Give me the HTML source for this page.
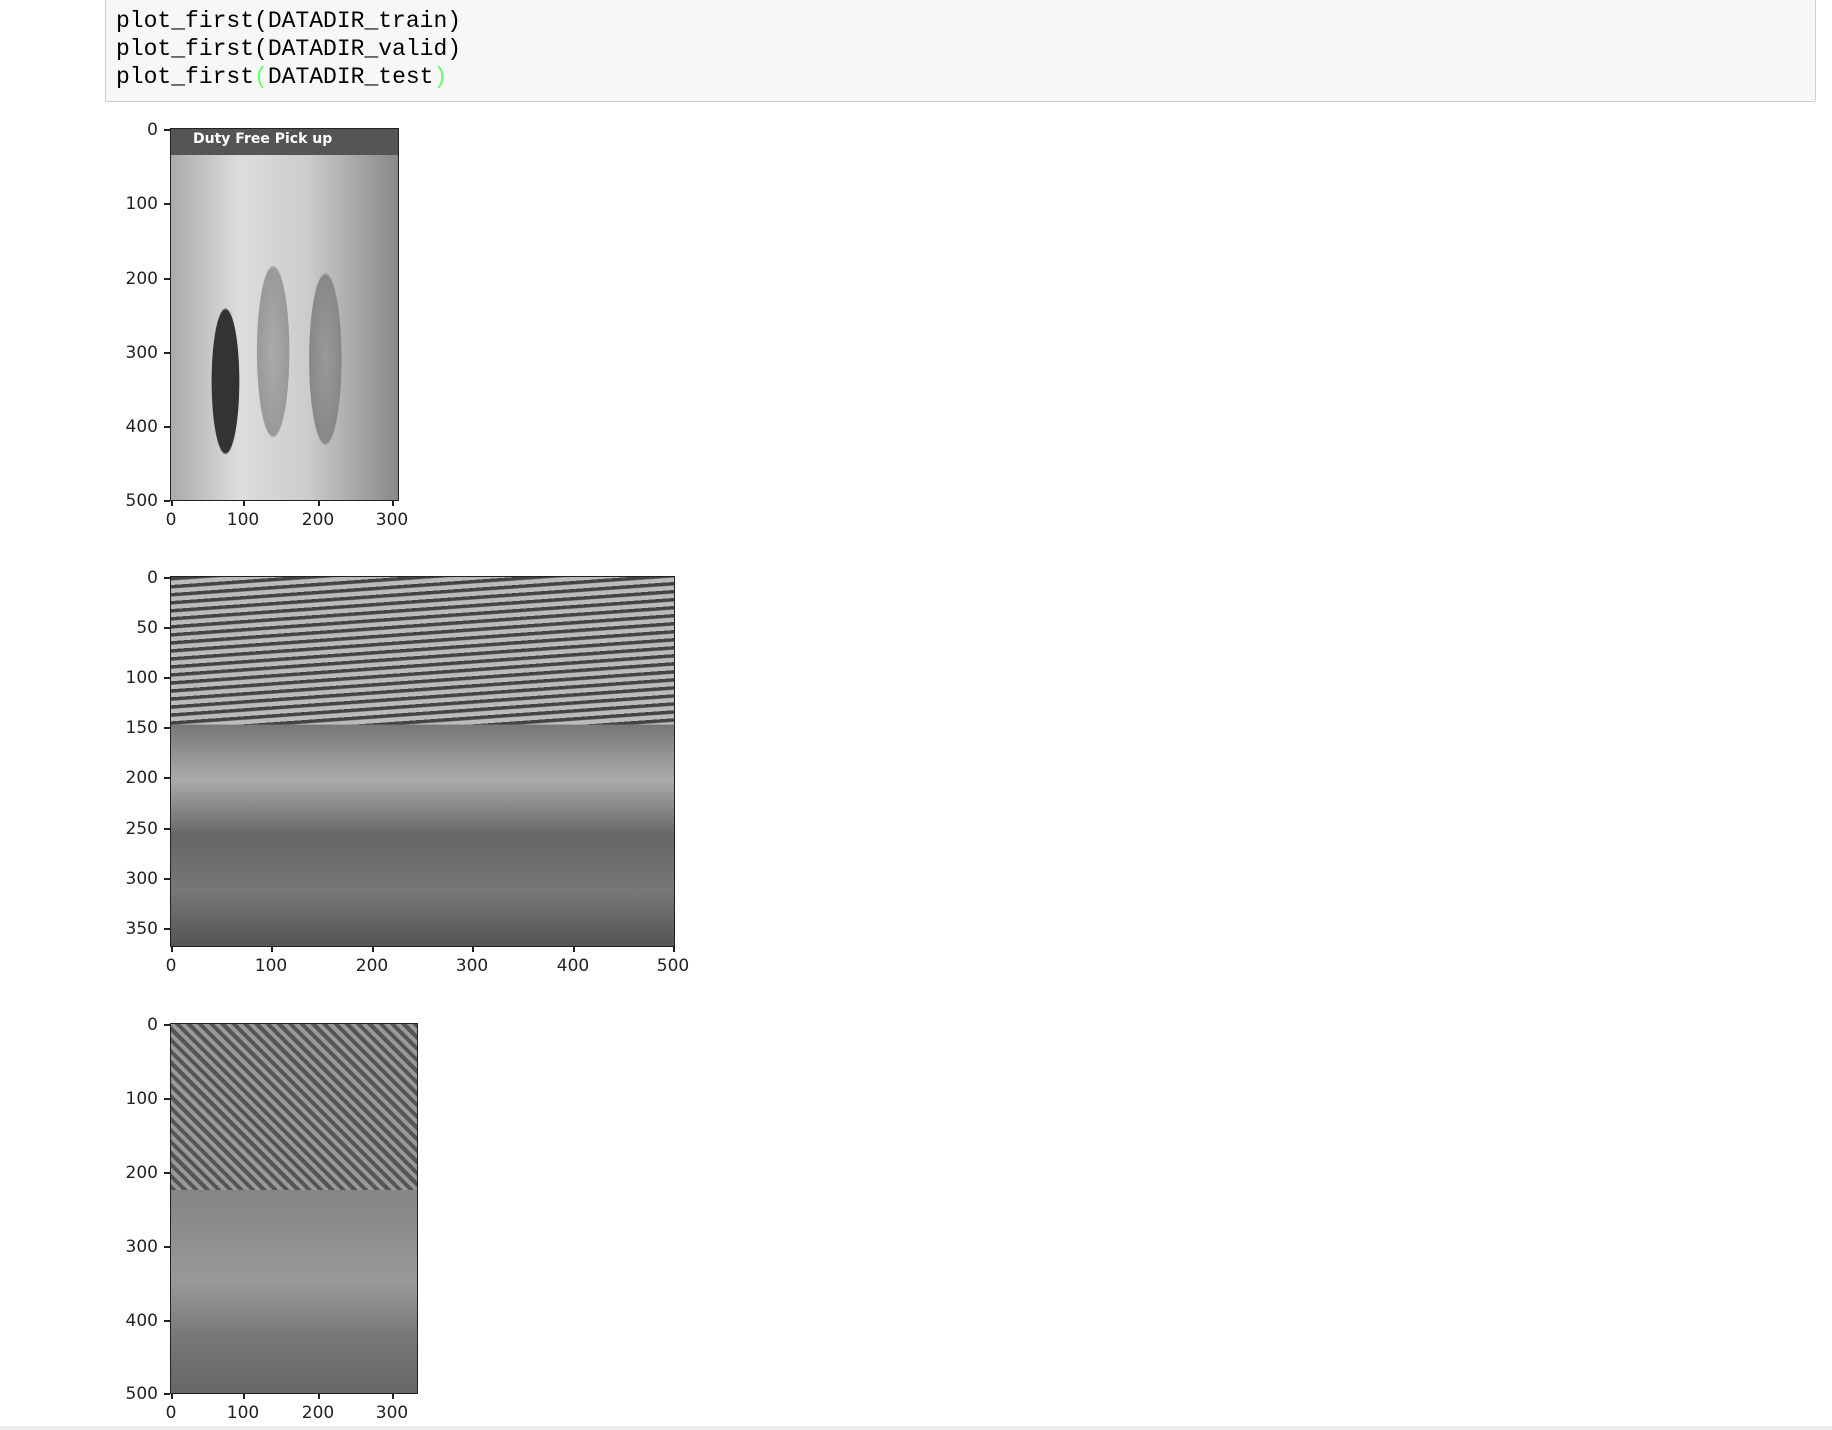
<!DOCTYPE html>
<html><head><meta charset="utf-8"><style>
body{margin:0;width:1832px;height:1430px;background:#fff;position:relative;overflow:hidden;font-family:"DejaVu Sans","Liberation Sans",sans-serif}
.cell{position:absolute;left:105px;top:-2px;width:1711px;height:104px;background:#f7f7f7;border:1px solid #cfcfcf;border-radius:2px;box-sizing:border-box}
.code{position:absolute;left:116px;top:7px;font-family:"Liberation Mono",monospace;font-size:23px;line-height:28px;color:#000;white-space:pre}
.g{color:#6f6}
.ax{position:absolute;border:1.5px solid #222;box-sizing:border-box}
.t{position:absolute;font-size:17px;color:#222;line-height:17px}
.yl{text-align:right;width:50px}
.tk{position:absolute;background:#222}
.bot{position:absolute;left:0;top:1426px;width:1832px;height:4px;background:#eee}
</style></head><body>
<div class="cell"></div>
<div class="code">plot_first(DATADIR_train)
plot_first(DATADIR_valid)
plot_first<span class="g">(</span>DATADIR_test<span class="g">)</span></div>

<!-- plot 1 -->
<div class="ax" style="left:170px;top:128px;width:229px;height:373px;background:
linear-gradient(180deg,#555 0,#555 7%,transparent 7%),
radial-gradient(ellipse 10% 32% at 24% 68%,#333 0,#333 60%,transparent 62%),
radial-gradient(ellipse 14% 45% at 45% 60%,#aaa 0,#999 50%,transparent 52%),
radial-gradient(ellipse 14% 45% at 68% 62%,#999 0,#888 50%,transparent 52%),
linear-gradient(90deg,#aaa,#ddd 30%,#ccc 60%,#888)"></div>
<div style="position:absolute;left:193px;top:131px;color:#fff;font-size:14px;font-weight:bold">Duty Free Pick up</div>

<!-- plot 2 -->
<div class="ax" style="left:170px;top:576px;width:505px;height:371px;background:
repeating-linear-gradient(176deg,#444 0,#444 3px,#bbb 4px,#bbb 8px) 0 0/100% 40% no-repeat,
linear-gradient(160deg,#ddd 0,#999 30%,transparent 30%) 0 0/100% 50% no-repeat,
linear-gradient(180deg,#777 0,#777 40%,#aaa 55%,#666 70%,#777 85%,#555 100%)"></div>

<!-- plot 3 -->
<div class="ax" style="left:170px;top:1023px;width:248px;height:371px;background:
repeating-linear-gradient(45deg,#555 0,#555 4px,#999 4px,#999 8px) 0 0/100% 45% no-repeat,
linear-gradient(180deg,#777 0,#888 50%,#999 70%,#777 85%,#666 100%)"></div>

<div id="lbl"></div>
<script>
var h='';
function y(x,ys,labels){labels.forEach(function(l,i){h+='<div class="t yl" style="left:'+(x-62)+'px;top:'+(ys[i]-7)+'px">'+l+'</div><div class="tk" style="left:'+(x-6)+'px;top:'+ys[i]+'px;width:6px;height:1.5px"></div>';});}
function xx(yb,xs,labels){labels.forEach(function(l,i){h+='<div class="t" style="left:'+(xs[i]-40)+'px;width:80px;text-align:center;top:'+(yb+12)+'px">'+l+'</div><div class="tk" style="left:'+xs[i]+'px;top:'+yb+'px;width:1.5px;height:6px"></div>';});}
y(170,[129,203,278,352,426,500],['0','100','200','300','400','500']);
xx(500,[171,243,318,392],['0','100','200','300']);
y(170,[577,627,677,727,777,828,878,928],['0','50','100','150','200','250','300','350']);
xx(946,[171,271,372,472,573,673],['0','100','200','300','400','500']);
y(170,[1024,1098,1172,1246,1320,1393],['0','100','200','300','400','500']);
xx(1393,[171,243,318,392],['0','100','200','300']);
document.getElementById('lbl').innerHTML=h;
</script>
<div class="bot"></div>
</body></html>
